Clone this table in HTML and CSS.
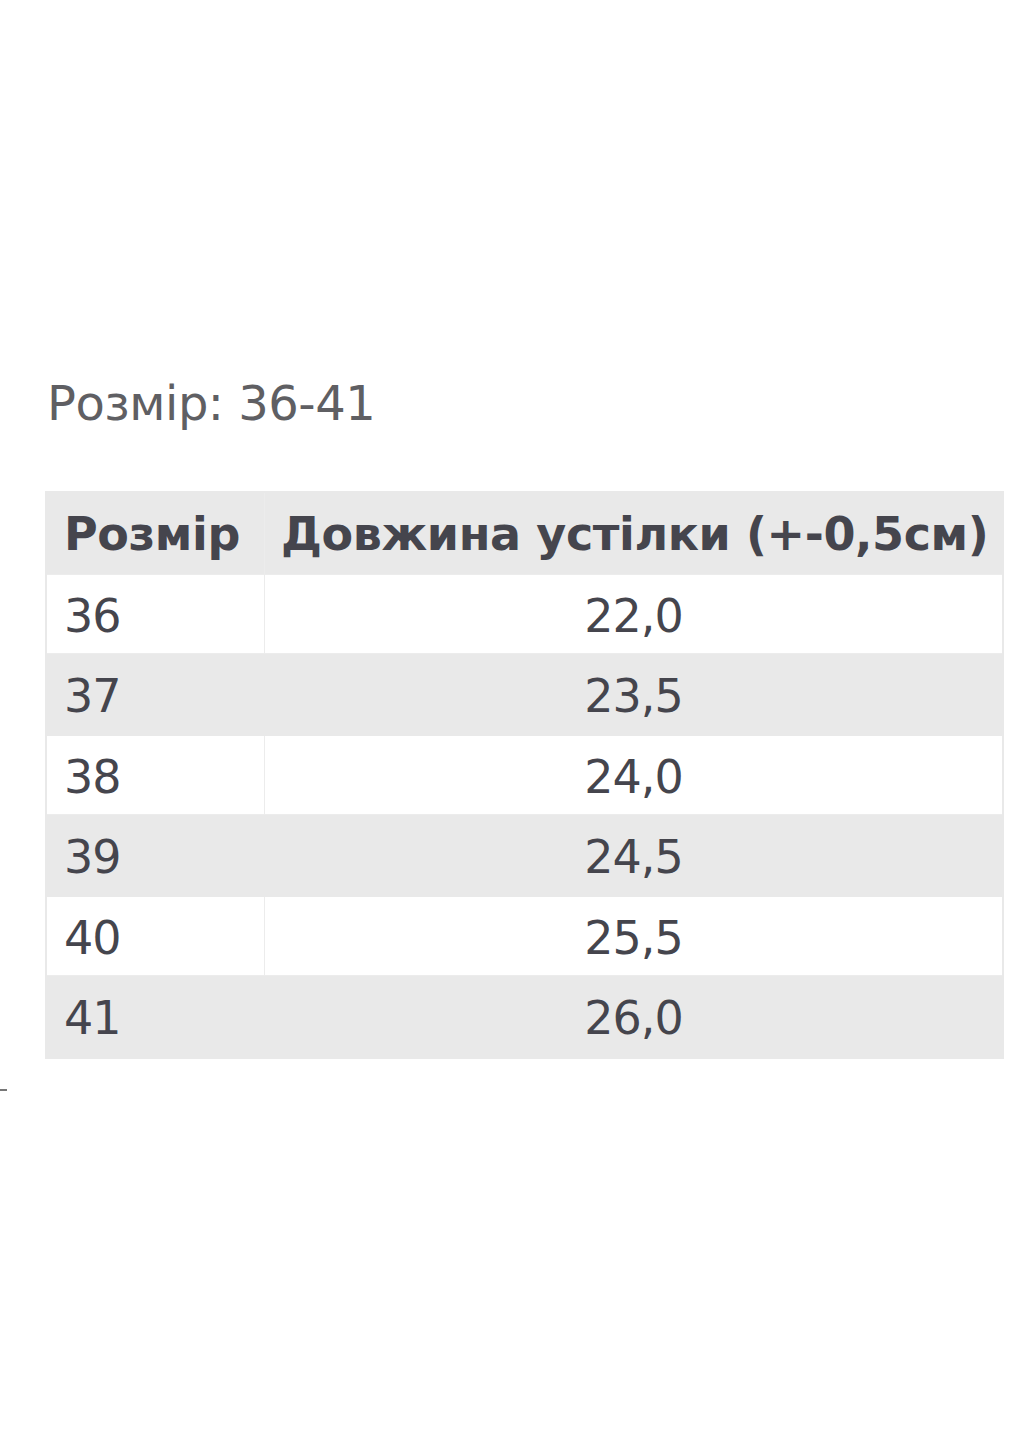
FILE: index.html
```html
<!DOCTYPE html>
<html lang="uk">
<head>
<meta charset="utf-8">
<title>Розмір</title>
<link rel="stylesheet" href="styles.css">
</head>
<body>
<main class="page">
  <h1 class="title">Розмір: 36-41</h1>
  <table class="sizes">
    <thead>
      <tr><th class="c-size">Розмір</th><th class="c-len">Довжина устілки (+-0,5см)</th></tr>
    </thead>
    <tbody>
      <tr class="row-w"><td class="c-size">36</td><td class="c-len">22,0</td></tr>
      <tr class="row-g"><td class="c-size">37</td><td class="c-len">23,5</td></tr>
      <tr class="row-w"><td class="c-size">38</td><td class="c-len">24,0</td></tr>
      <tr class="row-g"><td class="c-size">39</td><td class="c-len">24,5</td></tr>
      <tr class="row-w"><td class="c-size">40</td><td class="c-len">25,5</td></tr>
      <tr class="row-g"><td class="c-size">41</td><td class="c-len">26,0</td></tr>
    </tbody>
  </table>
  <div class="dash"></div>
</main>
</body>
</html>
```

FILE: styles.css
```css
html, body {
  margin: 0;
  padding: 0;
  background: #ffffff;
}
.page {
  position: relative;
  width: 1035px;
  height: 1440px;
  padding: 373px 0 0 45px;
  box-sizing: border-box;
  font-family: "DejaVu Sans", "Noto Sans", sans-serif;
}
.title {
  margin: 0 0 0 2px;
  font-size: 48px;
  line-height: 60px;
  font-weight: 400;
  color: #5f5f63;
  letter-spacing: -0.5px;
}
.sizes {
  margin-top: 58px;
  width: 959px;
  border-collapse: collapse;
  border: 2px solid #e9e9e9;
  color: #45454d;
}
.sizes th, .sizes td {
  border: 1px solid #ececec;
  padding: 0 0 0 17px;
  text-align: left;
  white-space: nowrap;
}
.sizes th {
  background: #e9e9e9;
  height: 81px;
  font-size: 46px;
  font-weight: 700;
  letter-spacing: -0.4px;
}
.sizes td {
  font-size: 46px;
  font-weight: 400;
  letter-spacing: -1px;
  padding-top: 3px;
}
.sizes .c-size { width: 200px; }
.sizes th.c-len { padding-left: 16px; }
.sizes td.c-len { text-align: center; padding-left: 0; }
.row-w td { background: #ffffff; height: 75px; }
.row-g td { background: #e9e9e9; height: 78px; border-color: #e9e9e9; }
.dash {
  position: absolute;
  left: 0;
  top: 1089px;
  width: 7px;
  height: 2px;
  background: #777;
}
```
